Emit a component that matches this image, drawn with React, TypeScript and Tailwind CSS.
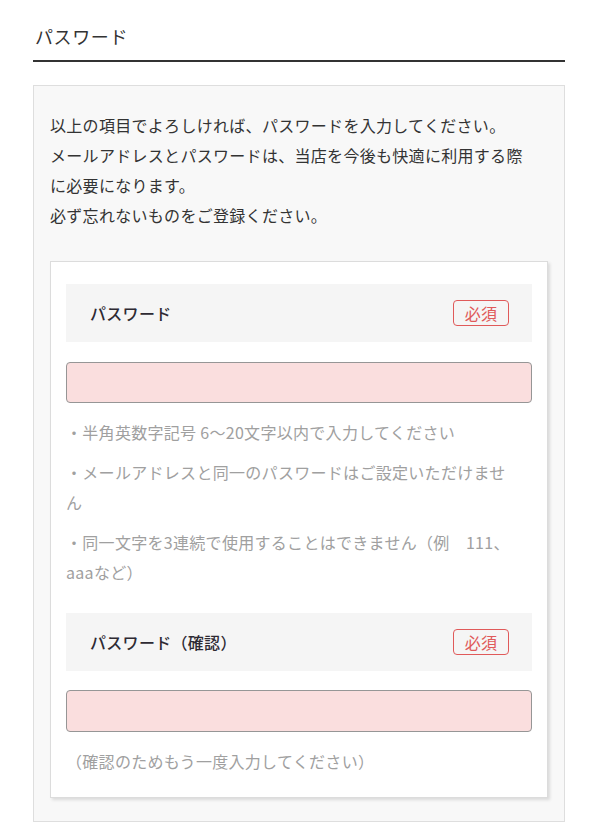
export default function App() {
  const font = { fontFamily: '"Noto Sans CJK JP", "Noto Sans", sans-serif' };

  return (
    <div className="min-h-screen bg-white px-[33px] pt-[21px] pb-4 text-[#333] tracking-[0.3px]" style={font}>
      {/* Section title */}
      <h2 className="border-b-2 border-[#333] pb-[9px] pl-[2px] text-[18px] leading-[30px] tracking-[0.6px]">
        パスワード
      </h2>

      {/* Grey box */}
      <div className="mt-[23px] border border-[#dedede] bg-[#f8f8f8] px-4 pt-[24px] pb-[23px]">
        <p className="pr-4 text-[16px] leading-[30px]">
          以上の項目でよろしければ、パスワードを入力してください。
          <br />
          メールアドレスとパスワードは、当店を今後も快適に利用する際に必要になります。
          <br />
          必ず忘れないものをご登録ください。
        </p>

        {/* White card */}
        <div className="mt-[31px] border border-[#dcdcdc] bg-white px-[15px] pt-[22px] pb-[21px] shadow-[2px_2px_3px_rgba(0,0,0,0.12)]">
          <FieldHeader label="パスワード" />
          <div className="mt-5 h-[41px] rounded-[4px] border border-[#969696] bg-[#fadede]" />
          <ul className="mt-[14px] flex flex-col gap-[10px] pr-3 text-[16px] leading-[30px] text-[#a0a0a0]">
            <li>・半角英数字記号 6〜20文字以内で入力してください</li>
            <li>・メールアドレスと同一のパスワードはご設定いただけません</li>
            <li>・同一文字を3連続で使用することはできません（例　111、aaaなど）</li>
          </ul>

          <div className="mt-[26px]">
            <FieldHeader label="パスワード（確認）" />
          </div>
          <div className="mt-[19px] h-[42px] rounded-[4px] border border-[#969696] bg-[#fadede]" />
          <p className="mt-[14px] text-[16px] leading-[30px] text-[#a0a0a0]">
            （確認のためもう一度入力してください）
          </p>
        </div>
      </div>
    </div>
  );
}

function FieldHeader({ label }: { label: string }) {
  return (
    <div className="flex h-[58px] items-center justify-between bg-[#f5f5f5] pl-6 pr-[23px]">
      <span className="text-[16px] font-medium text-[#2e2a33]">{label}</span>
      <span className="flex h-[26px] w-[56px] items-center justify-center rounded-[4px] border-[1.5px] border-[#e05a5a] text-[16px] text-[#e05a5a]">
        必須
      </span>
    </div>
  );
}
